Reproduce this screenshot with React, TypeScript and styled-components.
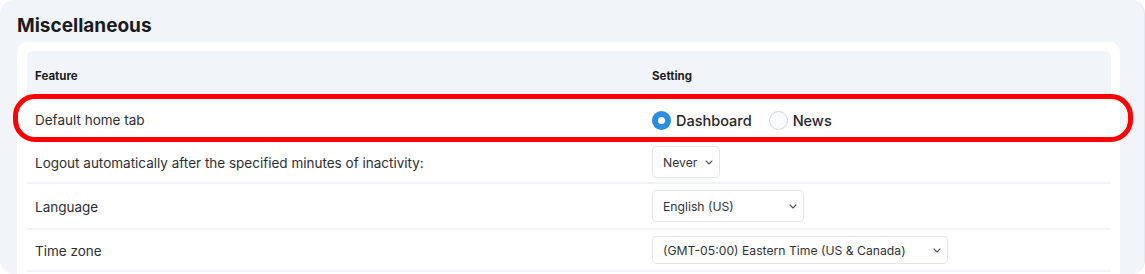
import React from 'react'
import styled, { createGlobalStyle } from 'styled-components'

const GlobalStyle = createGlobalStyle`
    body {
        margin: 0;
        background: #ffffff;
        font-family: Inter, "Open Sans", sans-serif;
    }
`

const Frame = styled.div`
    width: 1145px;
    height: 274px;
    box-sizing: border-box;
    background: #f1f4f9;
    border-radius: 14px;
    border-right: 1px solid #e4e7ee;
    padding: 13px 0 0 17px;
    overflow: hidden;
`

const Title = styled.h2`
    margin: 0 0 3px;
    font-size: 19px;
    line-height: 26px;
    font-weight: 700;
    color: #1b1b1f;
`

const Card = styled.div`
    width: 1103px;
    box-sizing: border-box;
    background: #ffffff;
    border-radius: 10px;
    padding: 9px 9px 0 10px;
    height: 260px;
`

const HeaderRow = styled.div`
    display: grid;
    grid-template-columns: 617px 1fr;
    align-items: center;
    height: 47px;
    padding-top: 2px;
    box-sizing: border-box;
    background: #f1f4f9;
    border-radius: 6px 6px 0 0;
`

const HeadCell = styled.div`
    padding-left: 8px;
    font-size: 11.5px;
    font-weight: 700;
    color: #1d1d21;
`

const Row = styled.div<{ $h: number }>`
    position: relative;
    display: grid;
    grid-template-columns: 617px 1fr;
    align-items: center;
    height: ${p => p.$h}px;
    box-sizing: border-box;
    border-bottom: 2px solid #f1f3f7;
`

const Cell = styled.div`
    padding: 2px 0 0 8px;
    font-size: 13.5px;
    color: #2e2e33;
    display: flex;
    align-items: center;
`

const Highlight = styled.div`
    position: absolute;
    left: -14px;
    right: -22px;
    top: -4px;
    bottom: -2px;
    border: 5px solid #ff0000;
    border-radius: 22px;
    pointer-events: none;
`

const RadioGroup = styled.div`
    display: flex;
    align-items: center;
`

const RadioDot = styled.span<{ $on?: boolean }>`
    width: 19px;
    height: 19px;
    box-sizing: border-box;
    border-radius: 50%;
    background: ${p => (p.$on ? '#ffffff' : '#fafbfc')};
    border: ${p => (p.$on ? '6px solid #2b8ee2' : '1px solid #d2d6de')};
    margin-right: 5px;
`

const RadioLabel = styled.span`
    font-size: 14.5px;
    font-weight: 500;
    color: #26262b;
    margin-right: 17px;
`

const SelectBox = styled.div<{ $w: number; $h: number }>`
    width: ${p => p.$w}px;
    height: ${p => p.$h}px;
    box-sizing: border-box;
    display: flex;
    align-items: center;
    justify-content: space-between;
    padding: 0 6px 0 10px;
    margin-top: -2px;
    border: 1px solid #e3e6ec;
    border-radius: 4px;
    background: #ffffff;
    font-size: 12.2px;
    color: #333338;
`

const Chevron = () => (
    <svg width="8" height="5" viewBox="0 0 8 5" fill="none">
        <path d="M1 1l3 3l3-3" stroke="#55575c" strokeWidth="1.1" strokeLinecap="round" strokeLinejoin="round" />
    </svg>
)

const rows = [
    { label: 'Logout automatically after the specified minutes of inactivity:', value: 'Never', w: 68, sh: 32, h: 42 },
    { label: 'Language', value: 'English (US)', w: 152, sh: 32, h: 46 },
    { label: 'Time zone', value: '(GMT-05:00) Eastern Time (US & Canada)', w: 296, sh: 28, h: 42 },
]

function App() {
    return (
        <>
            <GlobalStyle />
            <Frame>
                <Title>Miscellaneous</Title>
                <Card>
                    <HeaderRow>
                        <HeadCell>Feature</HeadCell>
                        <HeadCell>Setting</HeadCell>
                    </HeaderRow>
                    <Row $h={44}>
                        <Cell>Default home tab</Cell>
                        <Cell>
                            <RadioGroup>
                                <RadioDot $on />
                                <RadioLabel>Dashboard</RadioLabel>
                                <RadioDot />
                                <RadioLabel>News</RadioLabel>
                            </RadioGroup>
                        </Cell>
                        <Highlight />
                    </Row>
                    {rows.map(r => (
                        <Row key={r.label} $h={r.h}>
                            <Cell>{r.label}</Cell>
                            <Cell>
                                <SelectBox $w={r.w} $h={r.sh}>
                                    <span>{r.value}</span>
                                    <Chevron />
                                </SelectBox>
                            </Cell>
                        </Row>
                    ))}
                </Card>
            </Frame>
        </>
    )
}

export default App
